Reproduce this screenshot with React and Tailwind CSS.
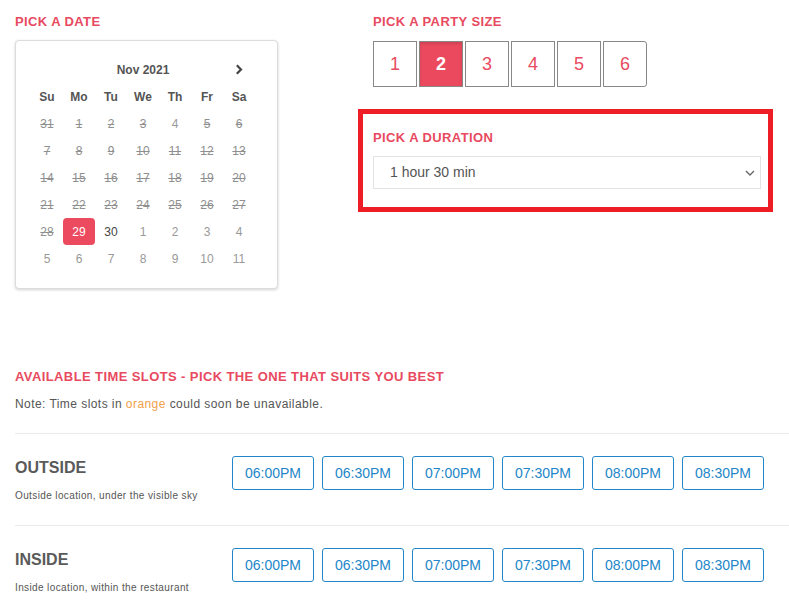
import React from "react";

const TITLE = "text-[13px] leading-[15px] font-bold tracking-[0.4px] text-[#e84a5f]";

const days = ["Su", "Mo", "Tu", "We", "Th", "Fr", "Sa"];
// type: p = past struck, n = normal-gray (no strike), s = selected, c = current dark
const weeks = [
  [["31", "p"], ["1", "p"], ["2", "p"], ["3", "p"], ["4", "n"], ["5", "p"], ["6", "p"]],
  [["7", "p"], ["8", "p"], ["9", "p"], ["10", "p"], ["11", "p"], ["12", "p"], ["13", "p"]],
  [["14", "p"], ["15", "p"], ["16", "p"], ["17", "p"], ["18", "p"], ["19", "p"], ["20", "p"]],
  [["21", "p"], ["22", "p"], ["23", "p"], ["24", "p"], ["25", "p"], ["26", "p"], ["27", "p"]],
  [["28", "p"], ["29", "s"], ["30", "c"], ["1", "n"], ["2", "n"], ["3", "n"], ["4", "n"]],
  [["5", "n"], ["6", "n"], ["7", "n"], ["8", "n"], ["9", "n"], ["10", "n"], ["11", "n"]],
];

const times = ["06:00PM", "06:30PM", "07:00PM", "07:30PM", "08:00PM", "08:30PM"];

function DayCell({ label, type }) {
  if (type === "s") {
    return (
      <div className="h-[27px] flex items-center justify-center rounded-[4px] bg-[#ec4a5e] text-white text-[12px]">
        {label}
      </div>
    );
  }
  const cls =
    type === "p"
      ? "text-[#8f8f8f] line-through"
      : type === "c"
      ? "text-[#444]"
      : "text-[#999]";
  return (
    <div className={"h-[27px] flex items-center justify-center text-[12px] " + cls}>
      {label}
    </div>
  );
}

function Calendar() {
  return (
    <div className="mt-[11px] w-[263px] h-[249px] border border-[#dcdcdc] rounded-[4px] shadow-[0_1px_3px_rgba(0,0,0,0.18)] pl-[15px] pt-[15px] bg-white">
      <div className="w-[224px] grid grid-cols-7">
        <div className="col-start-2 col-span-5 h-[27px] flex items-center justify-center text-[12px] font-bold text-[#555]">
          Nov 2021
        </div>
        <div className="h-[27px] flex items-center justify-center">
          <svg width="8" height="11" viewBox="0 0 8 11">
            <path d="M1.8 1.3 L6 5.5 L1.8 9.7" fill="none" stroke="#444" strokeWidth="2.2" />
          </svg>
        </div>
        {days.map((d) => (
          <div key={d} className="h-[27px] flex items-center justify-center text-[12px] font-bold text-[#555]">
            {d}
          </div>
        ))}
        {weeks.flat().map(([l, t], i) => (
          <DayCell key={i} label={l} type={t} />
        ))}
      </div>
    </div>
  );
}

function PartySize() {
  const sizes = ["1", "2", "3", "4", "5", "6"];
  return (
    <div className="mt-[12px] flex gap-[2px]">
      {sizes.map((s, i) => (
        <div
          key={s}
          className={
            "w-[44px] h-[46px] border border-[#888] flex items-center justify-center text-[18px] " +
            (s === "2" ? "bg-[#eb4a5e] text-white font-bold shadow-[inset_0_2px_3px_rgba(0,0,0,0.12)] " : "bg-white text-[#e84a5f] ") +
            (i === sizes.length - 1 ? "rounded-r-[3px]" : "")
          }
        >
          {s}
        </div>
      ))}
    </div>
  );
}

function SlotRow({ title, desc }) {
  return (
    <div className="flex border-t border-[#ebebeb] pt-[22px] pb-[23px]">
      <div className="w-[217px] pt-[3px]">
        <div className="text-[16px] leading-[18px] font-bold text-[#5a5a5a]">{title}</div>
        <div className="mt-[13px] text-[10px] leading-[12px] tracking-[0.38px] text-[#555]">{desc}</div>
      </div>
      <div className="flex gap-[8px] items-start">
        {times.map((t) => (
          <div
            key={t}
            className="w-[82px] h-[34px] border border-[#2386c8] rounded-[3px] flex items-center justify-center text-[14px] text-[#2386c8]"
          >
            {t}
          </div>
        ))}
      </div>
    </div>
  );
}

export default function App() {
  return (
    <div className="w-[789px] h-[611px] overflow-hidden bg-white font-['Liberation_Sans',Arial,sans-serif]">
      <div className="flex pl-[15px] pt-[14px]">
        <div className="w-[358px]">
          <div className={TITLE}>PICK A DATE</div>
          <Calendar />
        </div>
        <div>
          <div className={TITLE}>PICK A PARTY SIZE</div>
          <PartySize />
          <div className="mt-[22px] -ml-[15px] w-[415px] border-[5px] border-[#ee1c25] pl-[10px] pr-[7px] pt-[16px] pb-[18px]">
            <div className={TITLE}>PICK A DURATION</div>
            <div className="mt-[11px] w-[388px] h-[33px] border border-[#e3e3e3] flex items-center justify-between pl-[16px] pr-[4px] text-[14px] text-[#555]">
              <span>1 hour 30 min</span>
              <svg width="12" height="8" viewBox="0 0 12 8">
                <path d="M2 2 L6 6 L10 2" fill="none" stroke="#666" strokeWidth="1.4" />
              </svg>
            </div>
          </div>
        </div>
      </div>

      <div className="pl-[15px] mt-[80px]">
        <div className={TITLE}>AVAILABLE TIME SLOTS - PICK THE ONE THAT SUITS YOU BEST</div>
        <div className="mt-[13px] text-[12px] leading-[14px] tracking-[0.44px] text-[#555]">
          Note: Time slots in <span className="text-[#f0a04b]">orange</span> could soon be unavailable.
        </div>
        <div className="mt-[22px]">
          <SlotRow title="OUTSIDE" desc="Outside location, under the visible sky" />
          <SlotRow title="INSIDE" desc="Inside location, within the restaurant" />
        </div>
      </div>
    </div>
  );
}
